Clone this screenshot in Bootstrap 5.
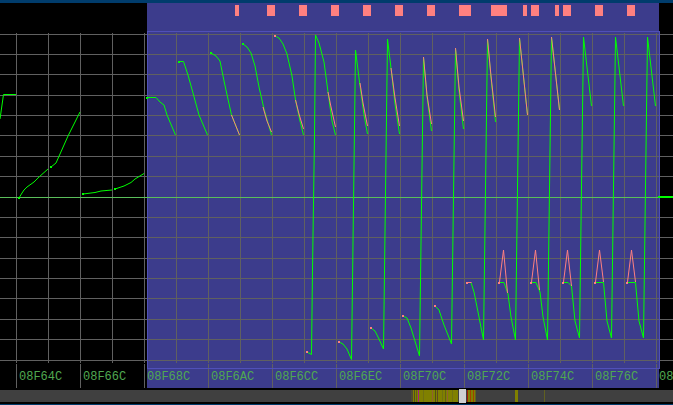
<!DOCTYPE html>
<html lang="en">
<head>
  <meta charset="UTF-8" />
  <meta name="viewport" content="width=device-width, initial-scale=1" />
  <title>Waveform view</title>
  <link
    href="https://cdn.jsdelivr.net/npm/bootstrap@5.3.1/dist/css/bootstrap.min.css"
    rel="stylesheet"
  />
  <style>
    body {
      background-color: #000;
      font-family: "Courier New", "Liberation Mono", monospace;
    }
    .top-strip {
      height: 3px;
      background-color: #003c6c;
    }
    .bottom-strip {
      height: 1px;
      background-color: #003c6c;
    }
    .selection {
      fill: #3c3c8c;
    }
    .selection-frame {
      fill: none;
      stroke: #5050b8;
    }
    .grid-lines {
      stroke: #606060;
    }
    .zero-line {
      stroke: #5abe5a;
    }
    .wave {
      fill: none;
      stroke: #00ff00;
    }
    .wave-diff {
      fill: none;
      stroke: #ff8080;
    }
    .dot {
      fill: #00ff00;
    }
    .dot-diff,
    .flag {
      fill: #ff8080;
    }
    .address {
      fill: #50a850;
      font-size: 12px;
    }
    .overview-track {
      fill: #404040;
    }
    .overview-thumb {
      fill: #d0d0d0;
    }
  </style>
</head>
<body>
  <main class="d-flex flex-column">
    <div class="top-strip"></div>

    <svg class="d-block w-100" viewBox="0 3 673 385" role="img" aria-label="Waveform">
      <rect class="selection" x="147" y="3" width="512" height="385" />
      <g id="flags" shape-rendering="crispEdges"></g>
      <g id="grid" class="grid-lines" shape-rendering="crispEdges"></g>
      <rect class="selection-frame" x="147.5" y="31.5" width="512" height="337" />
      <path class="zero-line" d="M0 197.5H673" />
      <g id="waves"></g>
      <rect class="dot" x="658" y="196" width="15" height="2" />
      <g id="addresses"></g>
    </svg>

    <svg class="d-block w-100" viewBox="0 0 673 16" role="img" aria-label="Overview">
      <rect class="overview-track" x="0" y="2" width="673" height="12" />
      <g id="regions" shape-rendering="crispEdges"></g>
      <rect class="overview-thumb" x="459" y="1" width="7" height="14" />
    </svg>

    <div class="bottom-strip"></div>
  </main>

  <script>
    (() => {
      const NS = 'http://www.w3.org/2000/svg';

      function add(parentId, tag, attrs, text) {
        const el = document.createElementNS(NS, tag);
        Object.entries(attrs).forEach(([key, value]) => el.setAttribute(key, value));
        if (text) el.textContent = text;
        document.getElementById(parentId).appendChild(el);
      }

      // grid: one column per 16 samples, rows around the zero line
      const rows = [34, 54, 74, 95, 115, 135, 156, 176, 197, 217, 237, 258, 278, 298, 319, 339, 360];
      rows.forEach((y) => add('grid', 'path', { d: `M0 ${y + 0.5}H673` }));
      for (let x = 16; x < 673; x += 32) {
        add('grid', 'path', { d: `M${x + 0.5} 33V363` });
      }

      // address ticks and labels
      const addresses = ['08F64C', '08F66C', '08F68C', '08F6AC', '08F6CC', '08F6EC',
        '08F70C', '08F72C', '08F74C', '08F76C', '08'];
      addresses.forEach((address, i) => {
        const x = 16 + i * 64;
        add('grid', 'path', { d: `M${x + 0.5} 364V388` });
        add('addresses', 'text', { class: 'address', x: x + 3, y: 380 }, address);
      });

      // changed blocks above the plot: [x, width]
      const flags = [[235, 4], [267, 8], [299, 8], [331, 8], [363, 8], [395, 8], [427, 8],
        [459, 12], [491, 16], [523, 4], [531, 8], [555, 4], [563, 8], [595, 8], [627, 8]];
      flags.forEach(([x, width]) => add('flags', 'rect', { class: 'flag', x, y: 5, width, height: 11 }));

      const waves = [
        '0,119 3.5,94.5 16,94.5',
        '19,198 22,193 24,190 27,187 34,182 39,177 48,169',
        '51,167 56,163 68,136 80,112',
        '83,194 95,192.5 101,191 112,190',
        '115,189 124,186 131,182.5 135,179 144,173.5',
        '147,97.5 156,97.5 160,102 164,105 167,115 175.5,135',
        '179,61.5 183.5,61.5 188,75 193,93 199,115 207.5,135',
        '211,53 216,56 220,61 224,81 231.5,115 239.5,135',
        '243,44 247,47 251,53 255,66 259,87 264,109 268,123 271.5,135',
        '275,36 279,38 283,44 287,54 292,76 295.5,100 300,121 303.5,135',
        '307,352 311.5,354.5 312.5,270 314.5,135 315.5,35 319,43 324,62 328,92 332,121 335.5,135',
        '339,342 343,344 347,349 351.5,359.5 355.5,50 360,86 364,115 367.5,134',
        '371,328 375,331 379,339 383.5,349 387.5,39 391,68 395,104 399.5,134',
        '403,316 407,318 411,328 419.5,356 423.5,57 427,97 431.5,131',
        '435,306 439,310 444,325 448,335 451.5,344 455.5,48 459,91 463.5,129',
        '471,282.5 474,292 478,312 483.5,340 487.5,39 491,78 495.5,122',
        '499,282.5 504,282.5 508,294 511,317 515.5,340 519.5,38 527.5,115',
        '531,282.5 536,282.5 540,292 543,317 547.5,340 551.5,37 559.5,110',
        '563,282.5 568,282.5 571.5,286 575,321 579.5,338 583.5,37 591.5,106',
        '595,282.5 603.5,282.5 607,321 611.5,338 615.5,37 623.5,106',
        '627,282.5 635.5,282.5 639,321 643.5,338 647.5,37 655.5,106'
      ];
      waves.forEach((points) => add('waves', 'polyline', { class: 'wave', points }));

      const diffs = [
        '231.5,115 239.5,135',
        '263,107 267,121 271.5,132',
        '295.5,100 299,114 303.5,129',
        '328,92 331,107 335.5,127',
        '360,83 363,103 367.5,126',
        '391,68 395,98 399.5,126',
        '423.5,57 427,95 431.5,124',
        '455.5,48 459,87 463.5,121',
        '467,282.5 471.5,282.5',
        '487.5,39 491,76 495.5,117',
        '519.5,38 527.5,115',
        '551.5,37 559.5,110',
        '499.5,282 503.5,250 507.5,293',
        '531.5,282 535.5,250 539.5,290',
        '563.5,282 567.5,250 571.5,286',
        '595.5,282 599.5,250 603.5,282',
        '627.5,282 631.5,250 635.5,282'
      ];
      diffs.forEach((points) => add('waves', 'polyline', { class: 'wave-diff', points }));

      // block starts
      const dots = [[18, 197], [50, 166], [82, 193], [114, 188], [146, 97], [178, 61], [210, 52], [242, 43]];
      const diffDots = [[274, 35], [306, 351], [338, 341], [370, 327], [402, 315], [434, 305],
        [466, 282], [498, 282], [530, 282], [562, 282], [594, 282], [626, 282]];
      dots.forEach(([x, y]) => add('waves', 'rect', { class: 'dot', x, y, width: 2, height: 2 }));
      diffDots.forEach(([x, y]) => add('waves', 'rect', { class: 'dot-diff', x, y, width: 2, height: 2 }));

      // overview regions: [x, width, colour]
      const regions = [[411, 2, '#504c30'], [413, 46, '#808000'], [414, 1, '#505020'], [416, 1, '#606010'],
        [418, 1, '#a02080'], [423, 1, '#707010'], [432, 1, '#906030'], [435, 1, '#505010'],
        [437, 1, '#604820'], [442, 1, '#707010'], [445, 1, '#606010'], [447, 1, '#906030'],
        [452, 1, '#707010'], [458, 1, '#404040'], [466, 1, '#404040'], [467, 9, '#808000'],
        [467, 1, '#a02000'], [470, 1, '#a04000'], [473, 1, '#a04000'], [475, 1, '#606020'],
        [515, 3, '#808000'], [544, 1, '#606020']];
      regions.forEach(([x, width, fill]) => add('regions', 'rect', { x, y: 2, width, height: 12, fill }));
    })();
  </script>

  <script
    src="https://cdn.jsdelivr.net/npm/bootstrap@5.3.1/dist/js/bootstrap.bundle.min.js"
  ></script>
</body>
</html>
